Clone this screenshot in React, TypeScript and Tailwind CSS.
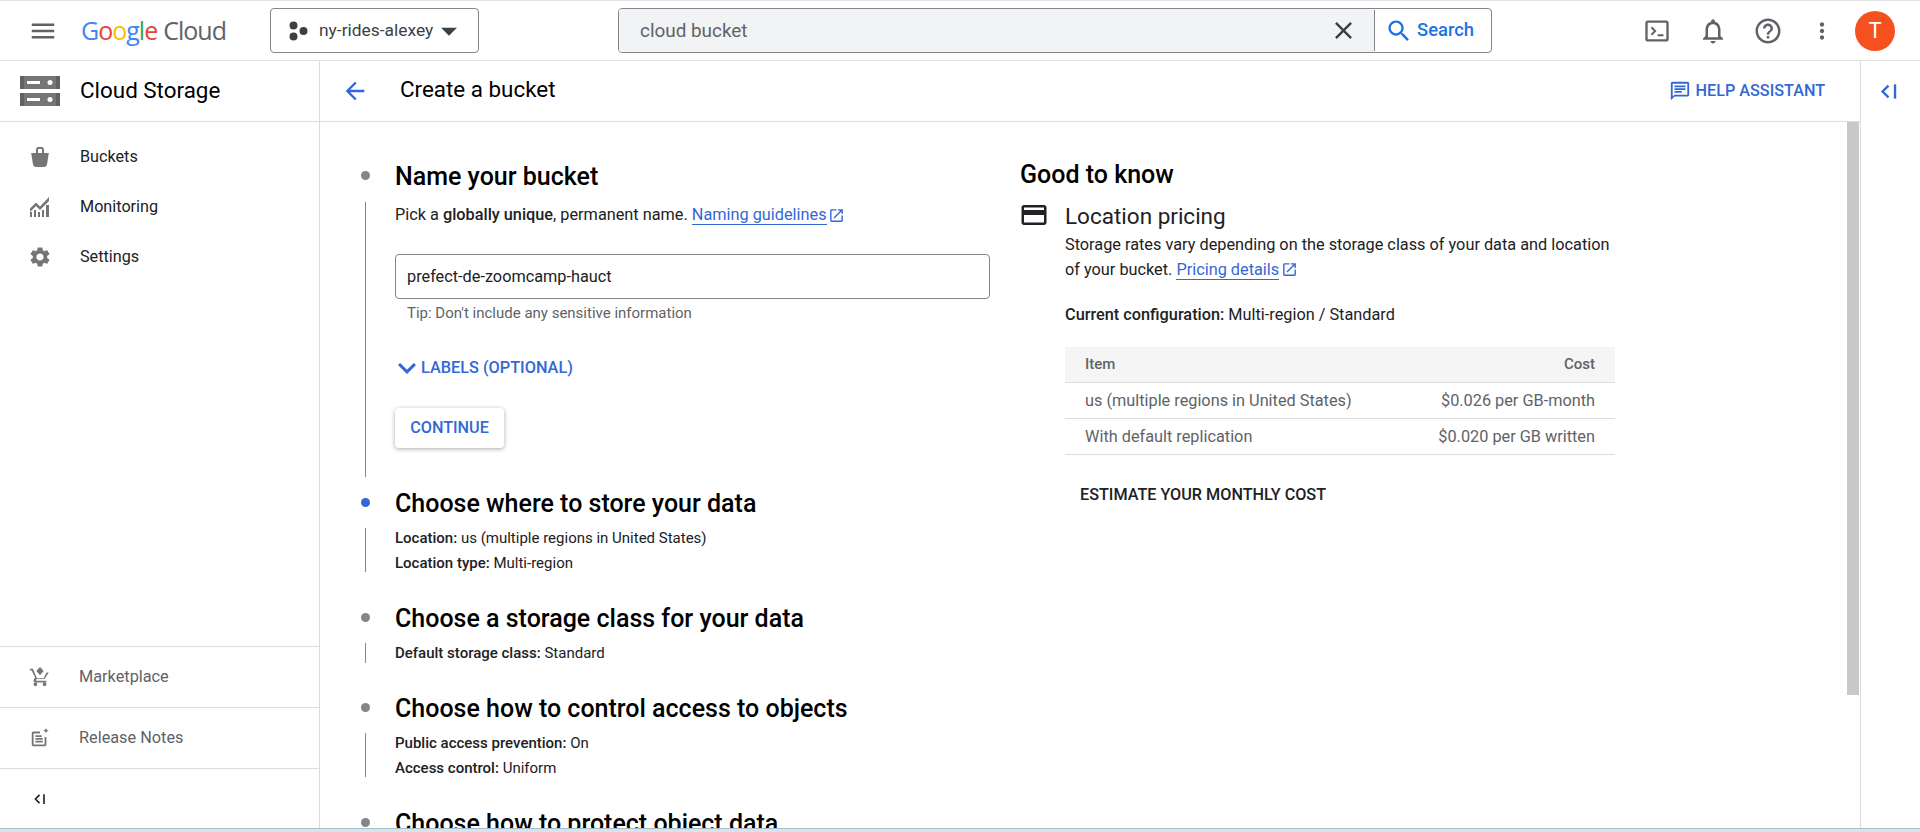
import React from "react";

const P = {
  menu: "M3 18h18v-2H3v2zm0-5h18v-2H3v2zm0-7v2h18V6H3z",
  close: "M19 6.41L17.59 5 12 10.59 6.41 5 5 6.41 10.59 12 5 17.59 6.41 19 12 13.41 17.59 19 19 17.59 13.41 12z",
  search: "M15.5 14h-.79l-.28-.27C15.41 12.59 16 11.11 16 9.5 16 5.91 13.09 3 9.5 3S3 5.91 3 9.5 5.91 16 9.5 16c1.61 0 3.09-.59 4.23-1.57l.27.28v.79l5 4.99L20.49 19l-4.99-5zm-6 0C7.01 14 5 11.99 5 9.5S7.01 5 9.5 5 14 7.01 14 9.5 11.99 14 9.5 14z",
  bell: "M12 22c1.1 0 2-.9 2-2h-4c0 1.1.9 2 2 2zm6-6v-5c0-3.07-1.63-5.64-4.5-6.32V4c0-.83-.67-1.5-1.5-1.5s-1.5.67-1.5 1.5v.68C7.64 5.36 6 7.92 6 11v5l-2 2v1h16v-1l-2-2zm-2 1H8v-6c0-2.48 1.51-4.5 4-4.5s4 2.02 4 4.5v6z",
  help: "M11 18h2v-2h-2v2zm1-16C6.48 2 2 6.48 2 12s4.48 10 10 10 10-4.48 10-10S17.52 2 12 2zm0 18c-4.41 0-8-3.59-8-8s3.59-8 8-8 8 3.59 8 8-3.59 8-8 8zm0-14c-2.21 0-4 1.79-4 4h2c0-1.1.9-2 2-2s2 .9 2 2c0 2-3 1.75-3 5h2c0-2.25 3-2.5 3-5 0-2.21-1.79-4-4-4z",
  more: "M12 8c1.1 0 2-.9 2-2s-.9-2-2-2-2 .9-2 2 .9 2 2 2zm0 2c-1.1 0-2 .9-2 2s.9 2 2 2 2-.9 2-2-.9-2-2-2zm0 6c-1.1 0-2 .9-2 2s.9 2 2 2 2-.9 2-2-.9-2-2-2z",
  back: "M20 11H7.83l5.59-5.59L12 4l-8 8 8 8 1.41-1.41L7.83 13H20v-2z",
  settings: "M19.14 12.94c.04-.3.06-.61.06-.94 0-.32-.02-.64-.07-.94l2.03-1.58c.18-.14.23-.41.12-.61l-1.92-3.32c-.12-.22-.37-.29-.59-.22l-2.39.96c-.5-.38-1.03-.7-1.62-.94l-.36-2.54c-.04-.24-.24-.41-.48-.41h-3.84c-.24 0-.43.17-.47.41l-.36 2.54c-.59.24-1.13.57-1.62.94l-2.39-.96c-.22-.08-.47 0-.59.22L2.74 8.87c-.12.21-.08.47.12.61l2.03 1.58c-.05.3-.09.63-.09.94s.02.64.07.94l-2.03 1.58c-.18.14-.23.41-.12.61l1.92 3.32c.12.22.37.29.59.22l2.39-.96c.5.38 1.03.7 1.62.94l.36 2.54c.05.24.24.41.48.41h3.84c.24 0 .44-.17.47-.41l.36-2.54c.59-.24 1.13-.56 1.62-.94l2.39.96c.22.08.47 0 .59-.22l1.92-3.32c.12-.22.07-.47-.12-.61l-2.01-1.58zM12 15.6c-1.98 0-3.6-1.62-3.6-3.6s1.62-3.6 3.6-3.6 3.6 1.62 3.6 3.6-1.62 3.6-3.6 3.6z",
  open: "M19 19H5V5h7V3H5c-1.11 0-2 .9-2 2v14c0 1.1.89 2 2 2h14c1.1 0 2-.9 2-2v-7h-2v7zM14 3v2h3.59l-9.83 9.83 1.41 1.41L19 6.41V10h2V3h-7z",
  card: "M20 4H4c-1.11 0-1.99.89-1.99 2L2 18c0 1.11.89 2 2 2h16c1.11 0 2-.89 2-2V6c0-1.11-.89-2-2-2zm0 14H4v-6h16v6zm0-10H4V6h16v2z",
  expand: "M16.59 8.59L12 13.17 7.41 8.59 6 10l6 6 6-6z",
  chat: "M20 2H4c-1.1 0-2 .9-2 2v18l4-4h14c1.1 0 2-.9 2-2V4c0-1.1-.9-2-2-2zm0 14H6l-2 2V4h16v12zM6 6h12v2H6zM6 9h12v2H6zM6 12h8v2H6z",
  caret: "M7 10l5 5 5-5z",
  terminal: "M20 3H4c-1.1 0-2 .9-2 2v14c0 1.1.9 2 2 2h16c1.1 0 2-.9 2-2V5c0-1.1-.9-2-2-2zm0 16H4V5h16v14zM6.600 9.400l2.600 2.600-2.600 2.600 1.200 1.200 3.800-3.800-3.800-3.800-1.200 1.200zM12.500 14.800h5v1.600h-5z",
  bucket: "M8 8V4.500C8 3.100 9 2 10.500 2h3C15 2 16 3.100 16 4.500V8h4.800l-1.700 11c-.3 1.700-1.500 3-3.100 3H8c-1.600 0-2.800-1.300-3.100-3L3.200 8H8zm2-4v4h4V4h-4z",
  monitoring: "M2 22v-5h2v5H2zm4 0v-7h2v7H6zm4 0v-5h2v5h-2zm4 0v-7h2v7h-2zm4 0V10h3v12h-3zM2 13.500 8 7.500l4 4L21 2v4l-9 9-4-4-6 6v-3.500z",
  cart: "M7 18c-1.100 0-2 .9-2 2s.9 2 2 2 2-.9 2-2-.9-2-2-2zm10 0c-1.100 0-2 .9-2 2s.9 2 2 2 2-.9 2-2-.9-2-2-2zM1 3v2h2l3.600 7.600-1.400 2.400c-.7 1.300.3 3 1.800 3h12v-2H7.400l1.100-2h7.500c.7 0 1.400-.4 1.700-1L21.500 7h-2.300l-3.200 6H8.500L4.300 3H1zM12 1l4 4.500-4 4.500-4-4.500L12 1z",
  notes: "M19 11h-2v8H5V7h7V5H5c-1.100 0-2 .9-2 2v12c0 1.100.9 2 2 2h12c1.100 0 2-.9 2-2v-8zM7 9h7v2H7zm0 3h8v2H7zm0 3h8v2H7zM18.500 1l.9 2.100 2.100.9-2.100.9-.9 2.100-.9-2.100-2.100-.9 2.100-.9.9-2.100z",
  dots: "M7.500 2.500a4 4 0 1 1 0 8 4 4 0 0 1 0-8zm0 11a4 4 0 1 1 0 8 4 4 0 0 1 0-8zm10-5.500a4 4 0 1 1 0 8 4 4 0 0 1 0-8z",
};

function Icon({ d, className }: { d: string; className: string }) {
  return (
    <svg viewBox="0 0 24 24" fill="currentColor" className={className}>
      <path fillRule="evenodd" d={d} />
    </svg>
  );
}

function Collapse({ className }: { className: string }) {
  return (
    <svg viewBox="0 0 16 14" className={className} fill="none" stroke="currentColor">
      <path d="M8 2 3 7l5 5" strokeWidth="2" />
      <path d="M13.500 1v12" strokeWidth="2" />
    </svg>
  );
}

function NavItem({ icon, label }: { icon: string; label: string }) {
  return (
    <div className="flex items-center h-[50px]">
      <Icon d={icon} className="ml-[28px] w-[24px] h-[24px] text-[#757575]" />
      <span className="ml-[28px] text-[16.2px] text-[#202124]">{label}</span>
    </div>
  );
}

function FootItem({ icon, label }: { icon: string; label: string }) {
  return (
    <div className="h-[61px] border-t border-[#dadce0] flex items-center shrink-0">
      <Icon d={icon} className="ml-[29px] w-[22px] h-[22px] text-[#757575]" />
      <span className="ml-[28px] text-[16.3px] text-[#5f6368]">{label}</span>
    </div>
  );
}

function StepHead({ title, active }: { title: string; active?: boolean }) {
  return (
    <div className="flex items-center h-[32px]">
      <span className="w-[10px] flex justify-center shrink-0">
        <span className={`block w-[9px] h-[9px] rounded-full -translate-y-[1px] ${active ? "bg-[#3367d6]" : "bg-[#80868b]"}`} />
      </span>
      <h2 className="ml-[25px] text-[25px] font-medium text-[#000000] whitespace-nowrap leading-[32px] translate-y-[1px]">{title}</h2>
    </div>
  );
}

function StepBody({ h, mt, children }: { h: string; mt: string; children: React.ReactNode }) {
  return (
    <div className={`flex ${h} ${mt}`}>
      <span className="w-[10px] flex justify-center shrink-0">
        <span className="block w-px h-full bg-[#80868b]" />
      </span>
      <div className="ml-[25px] flex-1 min-w-0">{children}</div>
    </div>
  );
}

function Info({ k, v }: { k: string; v: string }) {
  return (
    <div className="h-[25px] pt-[1px] leading-[19px] text-[15px] text-[#202124]">
      <span className="font-medium">{k}:</span> {v}
    </div>
  );
}

function Row({ a, b, head }: { a: string; b: string; head?: boolean }) {
  return (
    <div
      className={`flex items-center justify-between px-[20px] border-b border-[#dadce0] text-[#5f6368] h-[36px] ${
        head ? "bg-[#f5f5f5] text-[15px] font-medium" : "text-[16.3px] pt-[2px]"
      }`}
    >
      <span>{a}</span>
      <span>{b}</span>
    </div>
  );
}

export default function App() {
  return (
    <div className="h-[832px] w-[1920px] flex flex-col overflow-hidden bg-white font-['Roboto',sans-serif] text-[#202124]">
      <header className="h-[61px] shrink-0 border-t border-b border-[#e0e0e0] flex items-center">
        <Icon d={P.menu} className="ml-[28px] w-[30px] h-[30px] text-[#5f6368]" />
        <div className="ml-[23px] w-[147px] flex items-baseline text-[25px] font-['Open_Sans',sans-serif] tracking-[-1px] whitespace-nowrap">
          <span className="text-[#4285f4]">G</span>
          <span className="text-[#ea4335]">o</span>
          <span className="text-[#fbbc04]">o</span>
          <span className="text-[#4285f4]">g</span>
          <span className="text-[#34a853]">l</span>
          <span className="text-[#ea4335]">e</span>
          <span className="ml-[6px] text-[#5f6368]">Cloud</span>
        </div>
        <div className="ml-[42px] w-[209px] h-[45px] border border-[#80868b] rounded-[4px] flex items-center">
          <Icon d={P.dots} className="ml-[15px] w-[24px] h-[24px] text-[#3c4043] shrink-0" />
          <span className="ml-[9px] text-[17.4px] text-[#3c4043] whitespace-nowrap">ny-rides-alexey</span>
          <Icon d={P.caret} className="-ml-[3px] w-[38px] h-[38px] text-[#3c4043] shrink-0" />
        </div>
        <div className="ml-[139px] w-[874px] h-[45px] border border-[#80868b] rounded-[4px] flex items-stretch overflow-hidden">
          <div className="flex-1 bg-[#f1f3f4] flex items-center justify-between">
            <span className="ml-[21px] text-[18.9px] text-[#5f6368] translate-y-[1px]">cloud bucket</span>
            <Icon d={P.close} className="mr-[16px] w-[29px] h-[29px] text-[#3c4043]" />
          </div>
          <div className="w-[117px] flex items-center border-l border-[#80868b] my-[1px]">
            <Icon d={P.search} className="ml-[10px] w-[28px] h-[28px] text-[#1a73e8] shrink-0" />
            <span className="ml-[4px] text-[18.4px] font-medium text-[#1a73e8] -translate-y-[1px]">Search</span>
          </div>
        </div>
        <div className="flex-1" />
        <Icon d={P.terminal} className="w-[28px] h-[28px] text-[#5f6368] mr-[27px]" />
        <Icon d={P.bell} className="w-[30px] h-[30px] text-[#5f6368] mr-[25px]" />
        <Icon d={P.help} className="w-[30px] h-[30px] text-[#5f6368] mr-[26px]" />
        <Icon d={P.more} className="w-[26px] h-[26px] text-[#5f6368] mr-[20px]" />
        <span className="w-[40px] h-[40px] rounded-full bg-[#f4511e] text-white flex items-center justify-center text-[22px] mr-[25px]">T</span>
      </header>

      <div className="flex-1 min-h-0 flex">
        <aside className="w-[320px] shrink-0 border-r border-[#dadce0] flex flex-col">
          <div className="h-[61px] shrink-0 border-b border-[#dadce0] flex items-center">
            <svg viewBox="0 0 40 30" className="ml-[20px] w-[40px] h-[30px] shrink-0">
              <rect x="0" y="0" width="40" height="13" fill="#757575" />
              <rect x="0" y="17" width="40" height="13" fill="#757575" />
              <rect x="0" y="0" width="4" height="13" fill="#616161" />
              <rect x="36" y="0" width="4" height="13" fill="#616161" />
              <rect x="0" y="17" width="4" height="13" fill="#616161" />
              <rect x="36" y="17" width="4" height="13" fill="#616161" />
              <rect x="7" y="5" width="13" height="3" fill="#fff" />
              <rect x="7" y="22" width="13" height="3" fill="#fff" />
              <circle cx="30" cy="6.500" r="2.500" fill="#fff" />
              <circle cx="30" cy="23.500" r="2.500" fill="#fff" />
            </svg>
            <span className="ml-[20px] text-[22.400px] text-[#000]">Cloud Storage</span>
          </div>
          <nav className="pt-[10px] flex-1">
            <NavItem icon={P.bucket} label="Buckets" />
            <NavItem icon={P.monitoring} label="Monitoring" />
            <NavItem icon={P.settings} label="Settings" />
          </nav>
          <FootItem icon={P.cart} label="Marketplace" />
          <FootItem icon={P.notes} label="Release Notes" />
          <div className="h-[60px] border-t border-[#dadce0] flex items-center shrink-0">
            <Collapse className="ml-[33px] w-[13px] h-[12px] text-[#202124]" />
          </div>
        </aside>

        <main className="flex-1 min-w-0 flex flex-col">
          <div className="h-[61px] shrink-0 border-b border-[#dadce0] flex items-center">
            <Icon d={P.back} className="ml-[21px] w-[28px] h-[28px] text-[#3367d6]" />
            <h1 className="ml-[31px] text-[22.400px] text-[#000] -translate-y-[1px]">Create a bucket</h1>
            <div className="flex-1" />
            <Icon d={P.chat} className="w-[22px] h-[22px] text-[#3367d6]" />
            <span className="ml-[5px] mr-[35px] text-[16.200px] font-medium text-[#3367d6]">HELP ASSISTANT</span>
          </div>
          <div className="flex-1 min-h-0 flex">
            <div className="w-[700px] shrink-0 overflow-hidden pl-[40px] pt-[38px]">
              <StepHead title="Name your bucket" />
              <StepBody h="h-[275px]" mt="mt-[10px]">
                <p className="text-[16.300px] leading-[24px] text-[#202124] whitespace-nowrap flex items-center translate-y-[1px]">
                  <span>
                    Pick a <span className="font-medium">globally unique</span>, permanent name.{" "}
                    <span className="text-[#3367d6] border-b border-[#3367d6]">Naming guidelines</span>
                  </span>
                  <Icon d={P.open} className="ml-[1px] w-[17px] h-[17px] text-[#3367d6]" />
                </p>
                <div className="mt-[28px] w-[595px] h-[45px] border border-[#80868b] rounded-[4px] flex items-center pl-[11px] pt-[2px] text-[16.300px] text-[#202124]">
                  prefect-de-zoomcamp-hauct
                </div>
                <p className="ml-[12px] mt-[4px] text-[15px] leading-[20px] text-[#5f6368]">Tip: Don't include any sensitive information</p>
                <div className="mt-[33px] h-[24px] flex items-center text-[#3367d6]">
                  <Icon d={P.expand} className="w-[36px] h-[36px] -ml-[6px] shrink-0" />
                  <span className="-ml-[4px] text-[16.300px] font-medium">LABELS (OPTIONAL)</span>
                </div>
                <button className="mt-[28px] w-[109px] h-[40px] rounded-[4px] bg-white text-[#3367d6] text-[16.200px] font-medium shadow-[0_1px_4px_rgba(60,64,67,0.45)]">
                  CONTINUE
                </button>
              </StepBody>
              <div className="h-[10px]" />
              <StepHead title="Choose where to store your data" active />
              <StepBody h="h-[44px]" mt="mt-[9px]">
                <Info k="Location" v="us (multiple regions in United States)" />
                <Info k="Location type" v="Multi-region" />
              </StepBody>
              <div className="h-[30px]" />
              <StepHead title="Choose a storage class for your data" />
              <StepBody h="h-[20px]" mt="mt-[9px]">
                <Info k="Default storage class" v="Standard" />
              </StepBody>
              <div className="h-[29px]" />
              <StepHead title="Choose how to control access to objects" />
              <StepBody h="h-[44px]" mt="mt-[9px]">
                <Info k="Public access prevention" v="On" />
                <Info k="Access control" v="Uniform" />
              </StepBody>
              <div className="h-[30px]" />
              <StepHead title="Choose how to protect object data" />
            </div>

            <div className="flex-1 min-w-0 pt-[37px]">
              <h2 className="h-[32px] leading-[32px] text-[25px] font-medium text-[#000]">Good to know</h2>
              <div className="mt-[9px] flex">
                <Icon d={P.card} className="mt-0 w-[30px] h-[30px] -ml-[1px] text-[#202124] shrink-0" />
                <div className="ml-[16px] w-[550px]">
                  <h3 className="h-[32px] leading-[32px] text-[22.500px] text-[#202124]">Location pricing</h3>
                  <p className="text-[16.300px] leading-[25px] text-[#202124]">
                    Storage rates vary depending on the storage class of your data and location of your bucket.{" "}
                    <span className="text-[#3367d6] border-b border-[#3367d6]">Pricing details</span>
                    <Icon d={P.open} className="inline ml-[2px] -mt-[3px] w-[17px] h-[17px] text-[#3367d6]" />
                  </p>
                  <p className="mt-[20px] text-[16.300px] leading-[25px] text-[#202124]">
                    <span className="font-medium">Current configuration:</span> Multi-region / Standard
                  </p>
                  <div className="mt-[20px]">
                    <Row a="Item" b="Cost" head />
                    <Row a="us (multiple regions in United States)" b="$0.026 per GB-month" />
                    <Row a="With default replication" b="$0.020 per GB written" />
                  </div>
                  <div className="mt-[28px] ml-[15px] text-[16.200px] font-medium leading-[24px] text-[#202124]">ESTIMATE YOUR MONTHLY COST</div>
                </div>
              </div>
            </div>

            <div className="w-[12px] shrink-0 mr-[1px]">
              <div className="h-[573px] bg-[#c8c8c8]" />
            </div>
          </div>
        </main>

        <aside className="w-[60px] shrink-0 border-l border-[#dadce0] pl-[18px] pt-[22px]">
          <Collapse className="w-[19px] h-[17px] text-[#3367d6]" />
        </aside>
      </div>
      <div className="h-[4px] shrink-0 bg-[#d3e6ef] border-t border-[#a9bcc8]" />
    </div>
  );
}
